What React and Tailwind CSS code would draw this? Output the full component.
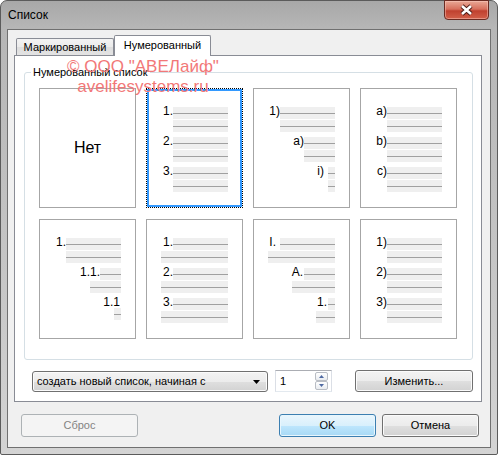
import React from "react";

const CARDS = [
  { none: true },
  {
    selected: true,
    items: [
      { t: "1.", a: "w-[55px]", b: "w-[55px]", m: "mr-0" },
      { t: "2.", a: "w-[55px]", b: "w-[55px]", m: "mr-0" },
      { t: "3.", a: "w-[55px]", b: "w-[55px]", m: "mr-0" },
    ],
  },
  {
    items: [
      { t: "1)", a: "w-[55px]", b: "w-[55px]", m: "mr-0" },
      { t: "a)", a: "w-[31px]", b: "w-[31px]", m: "mr-0" },
      { t: "i)", a: "w-[7px]", b: "w-[7px]", m: "mr-[4px]" },
    ],
  },
  {
    items: [
      { t: "a)", a: "w-[55px]", b: "w-[55px]", m: "mr-0" },
      { t: "b)", a: "w-[55px]", b: "w-[55px]", m: "mr-0" },
      { t: "c)", a: "w-[55px]", b: "w-[55px]", m: "mr-0" },
    ],
  },
  {
    items: [
      { t: "1.", a: "w-[55px]", b: "w-[55px]", m: "mr-0" },
      { t: "1.1.", a: "w-[21px]", b: "w-[31px]", m: "mr-0" },
      { t: "1.1", a: null, b: "w-[7px]", m: "mr-[1px]" },
    ],
  },
  {
    items: [
      { t: "1.", a: "w-[55px]", b: "w-[67px]", m: "mr-0" },
      { t: "2.", a: "w-[55px]", b: "w-[67px]", m: "mr-0" },
      { t: "3.", a: "w-[55px]", b: "w-[67px]", m: "mr-0" },
    ],
  },
  {
    items: [
      { t: "I.", a: "w-[55px]", b: "w-[67px]", m: "mr-[4px]" },
      { t: "A.", a: "w-[31px]", b: "w-[43px]", m: "mr-[1px]" },
      { t: "1.", a: "w-[7px]", b: "w-[19px]", m: "mr-[1px]" },
    ],
  },
  {
    items: [
      { t: "1)", a: "w-[55px]", b: "w-[55px]", m: "mr-0" },
      { t: "2)", a: "w-[55px]", b: "w-[55px]", m: "mr-0" },
      { t: "3)", a: "w-[55px]", b: "w-[55px]", m: "mr-0" },
    ],
  },
];

const Bar = ({ w }) => (
  <div className={`flex h-[12px] items-center bg-[#efefef] ${w}`}>
    <div className="h-px w-full bg-[#a0a0a0]" />
  </div>
);

const Card = ({ card }) => (
  <div
    className={`relative h-[120px] w-[97px] border bg-white ${
      card.selected ? "border-dotted border-black" : "border-[#a6a6a6]"
    }`}
  >
    {card.selected && (
      <div className="pointer-events-none absolute inset-0 border-2 border-[#3399ff]" />
    )}
    {card.none ? (
      <div className="flex h-full items-center justify-center text-[16px]">Нет</div>
    ) : (
      <div className="flex flex-col items-end gap-[5px] pr-[14px] pt-[18px] text-[12px]">
        {card.items.map((it, i) => (
          <div key={i} className="flex flex-col items-end gap-px">
            <div className="flex items-start">
              <span className={`leading-[9px] ${it.m}`}>{it.t}</span>
              {it.a && <Bar w={it.a} />}
            </div>
            <Bar w={it.b} />
          </div>
        ))}
      </div>
    )}
  </div>
);

const face =
  "rounded-[3px] border border-[#707070] bg-[linear-gradient(180deg,#f3f3f3_0%,#ececec_50%,#dfdfdf_51%,#d2d2d2_100%)] shadow-[inset_0_0_0_1px_#fbfbfb]";
const btn = `flex items-center justify-center ${face}`;

const CloseButton = () => (
  <div className="-mt-px ml-auto mr-[8px] flex h-[20px] w-[45px] items-center justify-center rounded-b-[4px] border border-[#6a2b22] bg-[linear-gradient(180deg,#e9a896_0%,#d7705d_45%,#c0412f_55%,#d2604a_100%)] shadow-[inset_0_0_0_1px_rgba(255,210,200,0.45)]">
    <svg width="15" height="12" viewBox="0 0 15 12">
      <path d="M3 2 L12 10 M12 2 L3 10" stroke="#4a1a14" strokeWidth="4.4" />
      <path d="M3 2 L12 10 M12 2 L3 10" stroke="#ffffff" strokeWidth="2.6" />
    </svg>
  </div>
);

export default function App() {
  return (
    <div className="h-[455px] w-[498px] bg-white">
      <div className="relative flex h-full w-full flex-col rounded-t-[7px] rounded-b-[2px] border border-[#5b5b5b] bg-[linear-gradient(180deg,#a8a8a8_0%,#b6b6b6_6%,#bdbdbd_30%,#c9c9c9_70%,#d4d4d4_100%)] font-['Liberation_Sans',Arial,sans-serif] text-[11px] text-black">
        {/* заголовок окна */}
        <div className="flex h-[28px] shrink-0 items-start">
          <span className="ml-[7px] mt-[7px] text-[12px] leading-[15px]">Список</span>
          <CloseButton />
        </div>

        {/* клиентская область */}
        <div className="mx-[6px] mb-[6px] flex flex-1 flex-col border border-[#707070] bg-[#f0f0f0]">
          <div className="flex flex-col pl-[6px] pr-[8px] pt-[5px]">
            <div className="relative z-10 -mb-px flex h-[21px] items-end pl-[2px]">
              <div className="mb-px flex h-[17px] w-[98px] items-center justify-center rounded-t-[2px] border border-b-0 border-[#898c95] bg-[linear-gradient(180deg,#f3f3f3_0%,#ebebeb_50%,#dedede_51%,#e3e3e3_100%)]">
                Маркированный
              </div>
              <div className="flex h-[21px] w-[97px] items-center justify-center rounded-t-[2px] border border-b-0 border-[#898c95] bg-white pb-[2px]">
                Нумерованный
              </div>
            </div>

            <div className="flex flex-col border border-[#898c95] bg-white pb-[9px] pl-[9px] pr-[8px] pt-[16px]">
              <div className="relative h-[288px] rounded-[3px] border border-[#d5dfe5] pl-[14px] pt-[15px]">
                <span className="absolute -top-[8px] left-[6px] bg-white px-[2px] leading-[14px]">
                  Нумерованный список
                </span>
                <div className="grid grid-cols-[repeat(4,97px)] gap-x-[10px] gap-y-[11px]">
                  {CARDS.map((c, i) => (
                    <Card key={i} card={c} />
                  ))}
                </div>
              </div>

              <div className="mt-[10px] flex h-[22px] items-start pl-[8px]">
                <div className={`${face} mt-px flex h-[21px] w-[236px] items-center justify-between pl-[4px] pr-[7px]`}>
                  <span>создать новый список, начиная с</span>
                  <svg width="7" height="4" viewBox="0 0 7 4">
                    <polygon points="0,0 7,0 3.5,4" fill="#000" />
                  </svg>
                </div>
                <div className="ml-[7px] flex h-[22px] w-[57px] items-center border border-[#abadb3] border-b-[#e3e9ef] border-x-[#dbdfe6] bg-white pl-[4px] pr-[3px]">
                  <span className="flex-1">1</span>
                  <div className="flex flex-col">
                    <div className="flex h-[9px] w-[13px] items-center justify-center rounded-[2px] border border-[#b9bdc4] bg-[linear-gradient(180deg,#ffffff,#e9ecf0)]">
                      <svg width="5" height="3" viewBox="0 0 5 3">
                        <polygon points="0,3 5,3 2.5,0" fill="#4f6aa3" />
                      </svg>
                    </div>
                    <div className="flex h-[9px] w-[13px] items-center justify-center rounded-[2px] border border-[#b9bdc4] bg-[linear-gradient(180deg,#ffffff,#e9ecf0)]">
                      <svg width="5" height="3" viewBox="0 0 5 3">
                        <polygon points="0,0 5,0 2.5,3" fill="#4f6aa3" />
                      </svg>
                    </div>
                  </div>
                </div>
                <div className={`${btn} ml-auto h-[22px] w-[118px]`}>Изменить...</div>
              </div>
            </div>
          </div>

          <div className="mt-[12px] flex h-[23px] pl-[13px] pr-[11px]">
            <div className="flex h-[23px] w-[117px] items-center justify-center rounded-[3px] border border-[#adb2b5] bg-[#f4f4f4] text-[#838383]">
              Сброс
            </div>
            <div className="ml-auto flex h-[23px] w-[97px] items-center justify-center rounded-[3px] border border-[#3c7fb1] bg-[linear-gradient(180deg,#eaf6fd_0%,#d9f0fc_50%,#bee6fd_51%,#a7d9f5_100%)] shadow-[inset_0_0_0_1px_#e8f6fd]">
              OK
            </div>
            <div className={`${btn} ml-[6px] h-[23px] w-[97px]`}>Отмена</div>
          </div>
        </div>

        {/* водяной знак */}
        <div className="pointer-events-none absolute left-[42px] top-[56px] w-[200px] text-center text-[17px] leading-[20px] text-[#f27878]">
          <div>© ООО "АВЕЛайф"</div>
          <div>avelifesystems.ru</div>
        </div>
      </div>
    </div>
  );
}
